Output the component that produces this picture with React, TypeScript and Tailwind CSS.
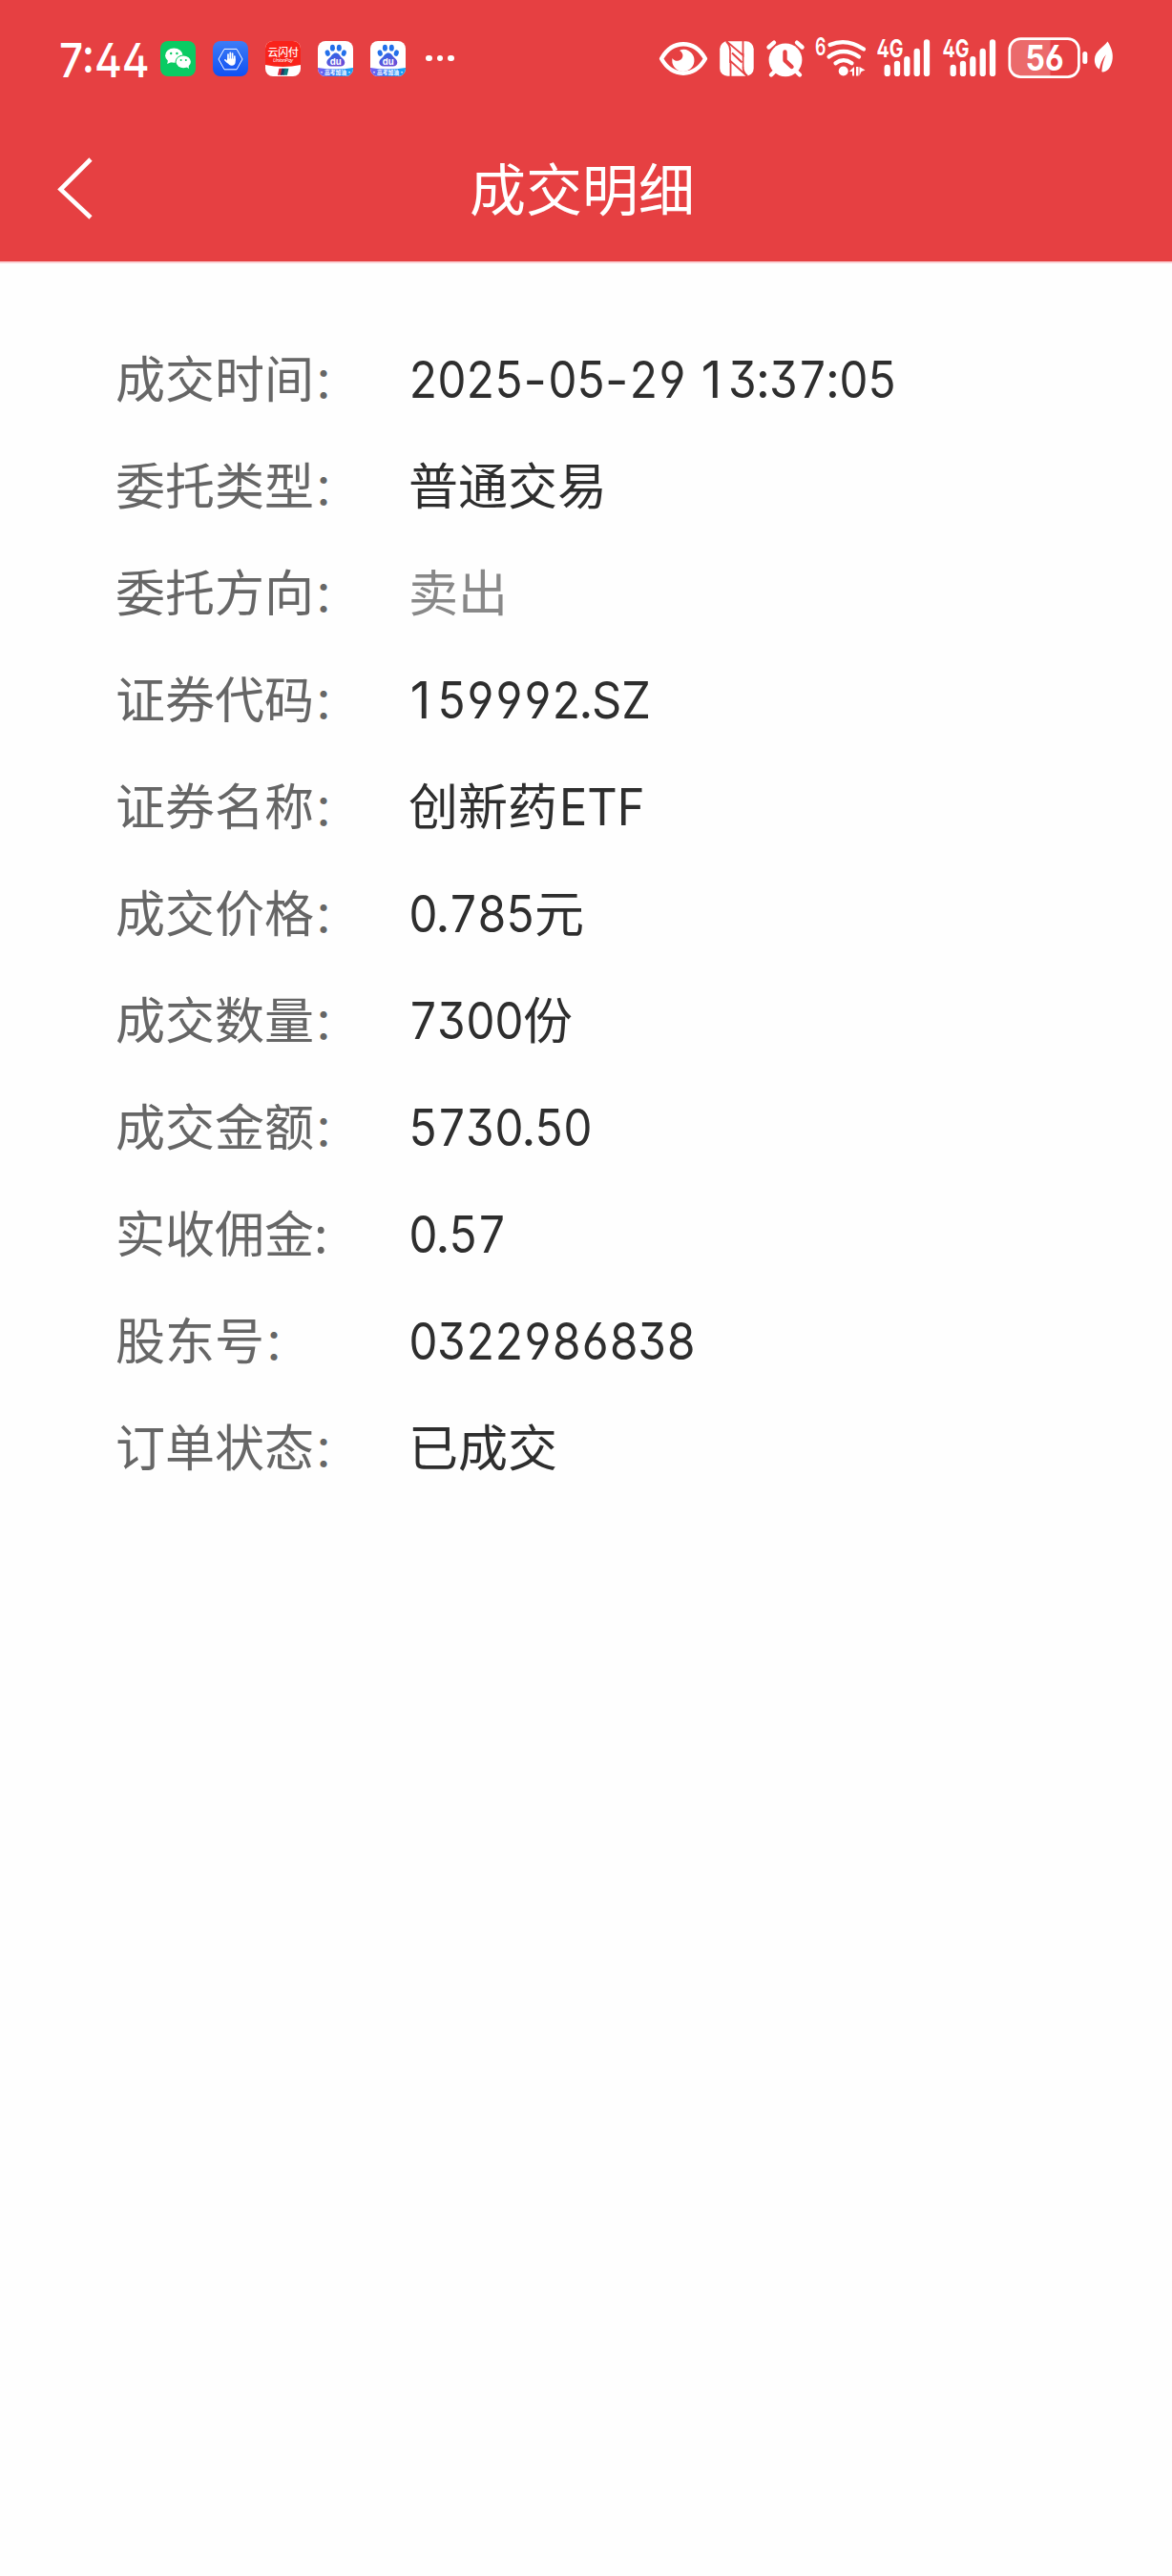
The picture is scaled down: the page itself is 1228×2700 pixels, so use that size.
import React from 'react';

type Run = { kind: 'cjk' | 'num' | 'abc' | 'sep'; text: string; box?: string };
type Row = { label: string; colon?: string; runs: Run[]; muted?: boolean };

const n = (text: string, box: string): Run => ({ kind: 'num', text, box });
const sep = (text: string, box: string): Run => ({ kind: 'sep', text, box });
const cjk = (text: string): Run => ({ kind: 'cjk', text });
const one = sep('1', 'w-[30px] pr-[5px]');

const rows: Row[] = [
  {
    label: '成交时间',
    runs: [
      n('2025', 'w-[120px]'),
      sep('-', 'w-[25.5px]'),
      n('05', 'w-[60px]'),
      sep('-', 'w-[25.5px]'),
      n('29', 'w-[60px]'),
      sep('\u00a0', 'w-[14px]'),
      one,
      n('3', 'w-[30px]'),
      sep(':', 'w-[13px]'),
      n('37', 'w-[60px]'),
      sep(':', 'w-[13px]'),
      n('05', 'w-[60px]'),
    ],
  },
  { label: '委托类型', runs: [cjk('普通交易')] },
  { label: '委托方向', runs: [cjk('卖出')], muted: true },
  {
    label: '证券代码',
    runs: [one, n('59992', 'w-[150px]'), sep('.', 'w-[12px]'), { kind: 'abc', text: 'SZ', box: 'w-[60px]' }],
  },
  { label: '证券名称', runs: [cjk('创新药'), { kind: 'abc', text: 'ETF', box: 'w-[92px] pl-[1.5px]' }] },
  { label: '成交价格', runs: [n('0', 'w-[30px]'), sep('.', 'w-[12px]'), n('785', 'w-[90px]'), cjk('元')] },
  { label: '成交数量', runs: [n('7300', 'w-[120px]'), cjk('份')] },
  { label: '成交金额', runs: [n('5730', 'w-[120px]'), sep('.', 'w-[12px]'), n('50', 'w-[60px]')] },
  { label: '实收佣金', colon: ':', runs: [n('0', 'w-[30px]'), sep('.', 'w-[12px]'), n('57', 'w-[60px]')] },
  { label: '股东号', runs: [n('0322986838', 'w-[300px]')] },
  { label: '订单状态', runs: [cjk('已成交')] },
];

function RunText({ run }: { run: Run }) {
  if (run.kind === 'cjk') return <span>{run.text}</span>;
  const font = "font-['Inter',sans-serif] text-[53px] leading-none";
  if (run.kind === 'sep') {
    return <span className={`${font} ${run.box} flex justify-center`}>{run.text}</span>;
  }
  return (
    <span className={`${font} ${run.box}`}>
      <span
        className={
          run.kind === 'num'
            ? "inline-block origin-left scale-x-[0.9] tracking-[-1px] [font-feature-settings:'ss01','cv02','cv03','cv04','tnum']"
            : 'inline-block origin-left scale-x-[0.92]'
        }
      >
        {run.text}
      </span>
    </span>
  );
}

function WeChat() {
  return (
    <svg width="37" height="37" viewBox="0 0 37 37">
      <rect width="37" height="37" rx="8" fill="#0acb63" />
      <ellipse cx="14.3" cy="15.2" rx="9.2" ry="7.6" fill="#fff" />
      <path d="M8 20l-.8 4 4.5-2z" fill="#fff" />
      <ellipse cx="24.2" cy="21.8" rx="8.6" ry="7.2" fill="#0acb63" />
      <ellipse cx="24.2" cy="21.8" rx="7.7" ry="6.4" fill="#fff" />
      <path d="M27 27l3 2-.6-4z" fill="#fff" />
      <circle cx="11.2" cy="13" r="1.2" fill="#0acb63" />
      <circle cx="17.4" cy="13" r="1.2" fill="#0acb63" />
      <circle cx="21.6" cy="20" r="1" fill="#0acb63" />
      <circle cx="26.8" cy="20" r="1" fill="#0acb63" />
    </svg>
  );
}

function HandShield() {
  return (
    <svg width="37" height="37" viewBox="0 0 37 37">
      <defs>
        <linearGradient id="hand" x1="0" y1="0" x2="0" y2="1">
          <stop offset="0" stopColor="#3d7cf5" />
          <stop offset="1" stopColor="#0f50f4" />
        </linearGradient>
      </defs>
      <rect width="37" height="37" rx="8" fill="url(#hand)" />
      <path d="M6 19l6-10.6h13L31 19l-6 10.8H12z" fill="none" stroke="#fff" strokeWidth="1" strokeLinejoin="round" />
      <g stroke="#fff" strokeWidth="1.7" strokeLinecap="round" fill="none">
        <path d="M16 20v-6M18.300 19v-6.600M20.600 19v-6M22.800 20v-4M15.500 22.500l-2.600-2.600" />
      </g>
      <path d="M15.200 18.500h8.500v3.500c0 2.400-1.700 3.700-3.700 3.700-2.200 0-3.200-1-4.200-2.500l-1.400-2z" fill="#fff" />
    </svg>
  );
}

function UnionPay() {
  return (
    <svg width="37" height="37" viewBox="0 0 37 37" className="overflow-visible">
      <defs>
        <clipPath id="up">
          <rect width="37" height="37" rx="8" />
        </clipPath>
      </defs>
      <g clipPath="url(#up)">
        <rect width="37" height="37" fill="#fff" />
        <path d="M0 0h37v25q-18.500 4-37 0z" fill="#f9231a" />
        <path d="M14.500 28.700h4l-1.600 7h-4z" fill="#d8283a" />
        <path d="M17.500 28.700h4l-1.600 7h-4z" fill="#1d3a66" />
        <path d="M20.500 28.700h4l-1.600 7h-4z" fill="#0d7a7d" />
      </g>
      <text x="2.500" y="15.600" fontSize="10.800" fontWeight="500" fill="#fff" fontFamily="'Noto Sans CJK SC',sans-serif">
        云闪付
      </text>
      <text x="8" y="22.300" fontSize="5.600" fontStyle="italic" fill="#fff" textLength="21" fontFamily="'Open Sans',sans-serif">
        UnionPay
      </text>
    </svg>
  );
}

function Baidu({ id }: { id: string }) {
  return (
    <svg width="37" height="37" viewBox="0 0 37 37" className="overflow-visible">
      <defs>
        <clipPath id={`${id}c`}>
          <rect width="37" height="37" rx="8" />
        </clipPath>
        <linearGradient id={`${id}b`} x1="0" y1="0" x2="1" y2="0">
          <stop offset="0" stopColor="#7a5af0" />
          <stop offset=".5" stopColor="#2f7df5" />
          <stop offset="1" stopColor="#12a5f5" />
        </linearGradient>
        <linearGradient id={`${id}p`} x1="0" y1="0" x2=".4" y2="1">
          <stop offset="0" stopColor="#2468e8" />
          <stop offset="1" stopColor="#6a4fd8" />
        </linearGradient>
      </defs>
      <g clipPath={`url(#${id}c)`}>
        <rect width="37" height="37" fill="#fff" />
        <path d="M0 28q18.500 3 37 0v9H0z" fill={`url(#${id}b)`} />
      </g>
      <g fill="#2370ea">
        <ellipse cx="10.200" cy="12.600" rx="2.500" ry="3.300" transform="rotate(-15 10.200 12.600)" />
        <ellipse cx="15.400" cy="7.200" rx="2.500" ry="3.400" />
        <ellipse cx="22.300" cy="7.200" rx="2.500" ry="3.400" />
        <ellipse cx="27.300" cy="12.600" rx="2.500" ry="3.300" transform="rotate(15 27.300 12.600)" />
      </g>
      <path
        d="M18.800 12.500c3 0 4 2.300 5.600 4.200 1.800 2 3.900 3 3.900 5.800 0 2.600-2 4-4.600 4H14c-2.800 0-4.700-1.600-4.700-4.200 0-2.600 2.200-3.700 4-5.600 1.500-1.700 2.700-4.200 5.500-4.200z"
        fill={`url(#${id}p)`}
      />
      <text x="18.700" y="24.700" fontSize="9.500" fontWeight="700" textAnchor="middle" fill="#fff" fontFamily="'Inter',sans-serif">
        du
      </text>
      <text x="18.500" y="35.200" fontSize="5.800" fontWeight="700" textAnchor="middle" fill="#fff" fontFamily="'Noto Sans CJK SC',sans-serif">
        ·高考加油·
      </text>
    </svg>
  );
}

function Eye() {
  return (
    <svg width="52" height="44" viewBox="690 39 52 44">
      <path
        d="M693 61.500C699 51 707 46.300 716 46.300S733 51 739 61.500C733 72 725 76.700 716 76.700S699 72 693 61.500z"
        fill="none"
        stroke="#fff"
        strokeWidth="4.400"
        strokeLinejoin="round"
      />
      <path d="M716.500 51.800a11.600 11.600 0 1 1-12 9.200c1.500 2.300 4 3.400 6.600 2.600 3.400-1 5-4 4-7-.6-2-1.800-3-3.200-3.700a11 11 0 0 1 4.600-1.100z" fill="#fff" />
    </svg>
  );
}

function Nfc() {
  return (
    <svg width="36" height="44" viewBox="754 39 36 44">
      <rect x="754.200" y="43.300" width="35.500" height="36.400" rx="8" fill="#fff" />
      <g fill="none" stroke="#e64042" strokeWidth="1.800">
        <path d="M761 43l17.500 15V43" />
        <path d="M761 43.500c2.800 2.500 4 5 4 9" />
        <path d="M783 80L765.500 64v16" />
        <path d="M783 79.500c-3-2.500-4.500-5-4.500-9" />
        <path d="M765 52v14M778.600 56v15" strokeWidth="1.600" />
        <path d="M767 55.500l10.500 10" strokeWidth="2" />
      </g>
    </svg>
  );
}

function Alarm() {
  return (
    <svg width="42" height="44" viewBox="802 39 42 44">
      <circle cx="823" cy="62.800" r="17.400" fill="#fff" />
      <g stroke="#fff" strokeLinecap="round" strokeWidth="4.400" fill="none">
        <path d="M805.500 49.500l5.500-4.800M840.500 49.500l-5.500-4.800" />
        <path d="M812 74.500l-4 4M834 74.500l4 4" />
      </g>
      <path d="M822.500 54.500v8.800l7 6.700" stroke="#e64042" strokeWidth="4.400" strokeLinecap="round" strokeLinejoin="round" fill="none" />
    </svg>
  );
}

function Wifi() {
  return (
    <svg width="56" height="44" viewBox="853 39 56 44" className="overflow-visible">
      <text x="854" y="58" fontSize="25" fontWeight="600" fill="#fff" textLength="11.5" lengthAdjust="spacingAndGlyphs" fontFamily="'Inter',sans-serif">
        6
      </text>
      <g stroke="#fff" strokeWidth="4.200" strokeLinecap="round" fill="none">
        <path d="M869.500 47q17.500-7.600 35.500 4.500" />
        <path d="M868.500 59.500q15-11 31.500 0" />
        <path d="M875.500 66.200q8.300-6 17 0" />
      </g>
      <circle cx="883.700" cy="74.500" r="5" fill="#fff" />
      <path d="M889.800 75l5.200-5v9.500h-2V75zM897 70h2.500v9.500H897zM900.500 70l6 3.500-4 1.500-2 4.500z" fill="#fff" />
    </svg>
  );
}

function Signal() {
  return (
    <svg width="58" height="44" viewBox="918 39 58 44" className="overflow-visible">
      <text
        x="918.500"
        y="60"
        fontSize="25.500"
        fontWeight="700"
        fill="#fff"
        textLength="28"
        lengthAdjust="spacingAndGlyphs"
        fontFamily="'Inter',sans-serif"
        className="[font-feature-settings:'cv02']"
      >
        4G
      </text>
      <g stroke="#fff" strokeWidth="6.300" strokeLinecap="round">
        <path d="M929.700 70.900v6M940 67v9.900M950.300 62.200v14.700M960.700 54v22.900M971 44.500v32.400" />
      </g>
    </svg>
  );
}

function Battery() {
  return (
    <svg width="86" height="44" viewBox="1055 39 86 44" className="overflow-visible">
      <path d="M1100.500 41h-31a11.500 11.500 0 0 0-11.500 11.500v16.500a11.500 11.500 0 0 0 11.500 11.500h31z" fill="#fff" fillOpacity=".22" />
      <rect x="1057.800" y="40.600" width="72.600" height="40" rx="11.500" fill="none" stroke="#fff" strokeWidth="2.700" />
      <rect x="1134.300" y="54" width="5" height="13" rx="2.500" fill="#fff" />
      <text
        x="1074.500"
        y="74.300"
        fontSize="36.500"
        fontWeight="700"
        fill="#fff"
        textLength="40"
        lengthAdjust="spacingAndGlyphs"
        fontFamily="'Inter',sans-serif"
        className="[font-feature-settings:'ss01','cv03']"
      >
        56
      </text>
    </svg>
  );
}

function Leaf() {
  return (
    <svg width="22" height="44" viewBox="1145 39 22 44">
      <path d="M1160.500 43.500c4.500 7 6.300 13.500 4.800 20.500-1.300 6.500-5 11.500-10 11.500-.8 0-1-.8-.8-1.800.5-5.500 1.600-11 4.400-16.500-4 4.500-6 9.600-7 15.300-3-1.500-5.200-5-5-10.500.3-9 9.300-12 13.600-18.500z" fill="#fff" />
    </svg>
  );
}

export default function App() {
  return (
    <div className="min-h-[2700px] w-full bg-[#fefefe] font-['Noto_Sans_CJK_SC',sans-serif]">
      <header className="h-[276px] border-b-2 border-[#fbd3d6] bg-[#e64042] text-white">
        <div className="flex h-[122px] items-center pr-[61px] pl-[62px]">
          <div className="w-[106px] pt-[3px]">
            <span className="inline-block origin-left scale-x-[0.88] font-['Inter',sans-serif] text-[50px] leading-none font-medium whitespace-nowrap [font-feature-settings:'cv02']">
              7:44
            </span>
          </div>
          <div className="flex items-center gap-[18px]">
            <WeChat />
            <HandShield />
            <UnionPay />
            <Baidu id="b1" />
            <Baidu id="b2" />
          </div>
          <div className="ml-[21px] flex gap-[5px]">
            <i className="size-[6.5px] rounded-full bg-white" />
            <i className="size-[6.5px] rounded-full bg-white" />
            <i className="size-[6.5px] rounded-full bg-white" />
          </div>
          <div className="ml-auto flex items-center">
            <Eye />
            <span className="w-3" />
            <Nfc />
            <span className="w-3" />
            <Alarm />
            <span className="w-[9px]" />
            <Wifi />
            <span className="w-[9px]" />
            <Signal />
            <span className="w-[11px]" />
            <Signal />
            <span className="w-[10px]" />
            <Battery />
            <span className="w-1" />
            <Leaf />
          </div>
        </div>
        <div className="flex h-[152px] items-center">
          <div className="w-[492px] pl-[60px]">
            <svg width="38" height="68" viewBox="60 165 38 68">
              <path d="M95 168L63.500 199.500 95 229" fill="none" stroke="#fff" strokeWidth="4.600" />
            </svg>
          </div>
          <h1 className="pb-[5px] text-[59px] leading-none font-normal">成交明细</h1>
        </div>
      </header>
      <main className="flex flex-col pt-[63px] pl-[121px]">
        {rows.map((row) => (
          <div key={row.label} className="flex h-[112px] items-baseline text-[52px] leading-[112px] whitespace-nowrap">
            <div className="w-[307px] text-[#666]">
              {row.label}
              {row.colon ?? <span className="-ml-[1.5px] text-[46px] leading-none">：</span>}
            </div>
            <div className={row.muted ? 'flex items-baseline text-[#888]' : 'flex items-baseline text-[#2e2e2e]'}>
              {row.runs.map((run, i) => (
                <RunText key={i} run={run} />
              ))}
            </div>
          </div>
        ))}
      </main>
    </div>
  );
}
